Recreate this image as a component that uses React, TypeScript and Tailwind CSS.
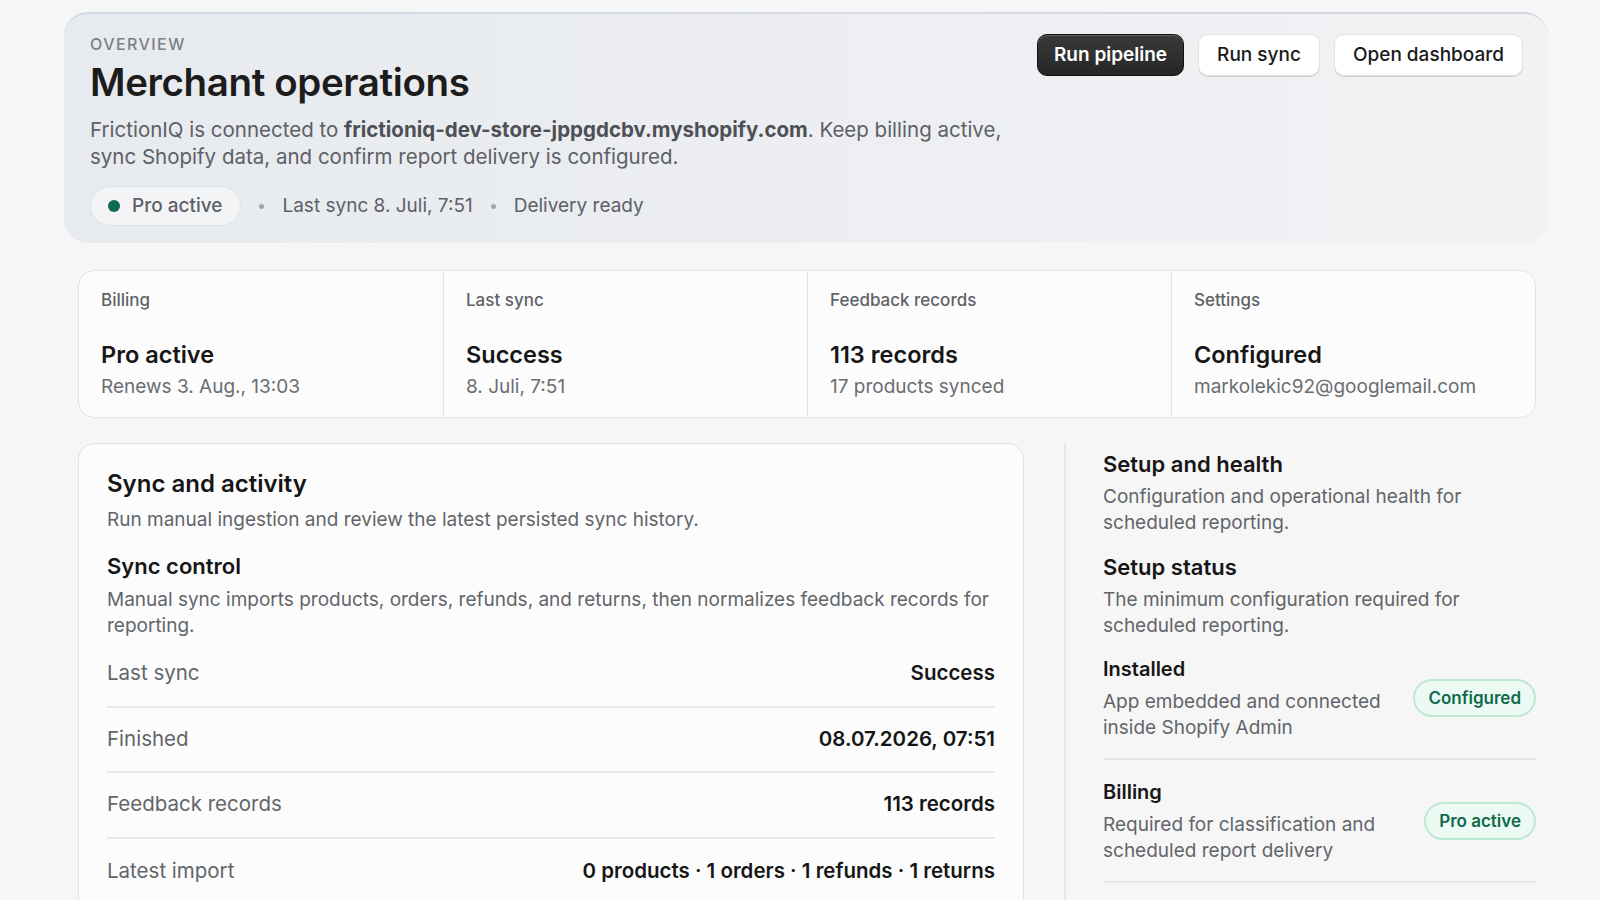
import React from 'react'

const font = "font-['Inter','Noto_Sans',sans-serif]"

const stats = [
  { label: 'Billing', value: 'Pro active', sub: 'Renews 3. Aug., 13:03' },
  { label: 'Last sync', value: 'Success', sub: '8. Juli, 7:51' },
  { label: 'Feedback records', value: '113 records', sub: '17 products synced' },
  { label: 'Settings', value: 'Configured', sub: 'markolekic92@googlemail.com' },
]

const rows = [
  { label: 'Last sync', value: 'Success' },
  { label: 'Finished', value: '08.07.2026, 07:51' },
  { label: 'Feedback records', value: '113 records' },
  { label: 'Latest import', value: '0 products · 1 orders · 1 refunds · 1 returns' },
]

const checks = [
  { title: 'Installed', desc: 'App embedded and connected inside Shopify Admin', badge: 'Configured' },
  { title: 'Billing', desc: 'Required for classification and scheduled report delivery', badge: 'Pro active' },
]

export default function App() {
  return (
    <div className={`${font} min-h-screen bg-[#f6f6f6] pl-[78px] pr-[64px] pt-3 text-[#1a1a1a] antialiased`}>
      {/* Hero */}
      <section className="-ml-[14px] -mr-3 rounded-3xl border-t-2 border-[#d3d9e1] bg-gradient-to-r from-[#e7eaee] to-[#f1f2f4] pl-[26px] pr-[25px] pt-[19px] pb-[17px]">
        <div className="flex justify-between">
          <div>
            <div className="text-[16px] font-medium leading-[22px] tracking-[0.09em] text-[#7b7f86]">OVERVIEW</div>
            <h1 className="mt-[4px] text-[38.5px] font-semibold leading-[46px] tracking-[-0.01em] text-[#1c1c1c]">Merchant operations</h1>
            <p className="mt-[11px] max-w-[930px] text-[20.5px] leading-[27px] text-[#5d6066]">
              FrictionIQ is connected to <span className="font-bold text-[#4d5056]">frictioniq-dev-store-jppgdcbv.myshopify.com</span>. Keep billing active, sync Shopify data, and confirm report delivery is configured.
            </p>
            <div className="mt-[16px] flex items-center text-[19px] text-[#5d6066]">
              <div className="flex h-[40px] items-center gap-[12px] rounded-full border border-[#dfe2e6] bg-[#f3f4f6] pl-[17px] pr-[18px] font-medium">
                <span className="h-[12px] w-[12px] rounded-full bg-[#0e6b52]" />
                Pro active
              </div>
              <span className="mx-[18px] h-[5px] w-[5px] rounded-full bg-[#a3a6ab]" />
              <span>Last sync 8. Juli, 7:51</span>
              <span className="mx-[18px] h-[5px] w-[5px] rounded-full bg-[#a3a6ab]" />
              <span>Delivery ready</span>
            </div>
          </div>
          <div className="flex items-start gap-[14px] pt-[1px]">
            <button className="h-[42px] rounded-[10px] border border-[#111] bg-gradient-to-b from-[#3a3a3a] to-[#262626] px-[16px] text-[19px] font-semibold text-white shadow-[inset_0_1px_0_rgba(255,255,255,0.2)]">
              Run pipeline
            </button>
            <button className="h-[42px] rounded-[10px] border border-[#e3e3e3] bg-white px-[18px] text-[19px] font-medium text-[#1a1a1a] shadow-[0_1px_0_#cfcfcf]">
              Run sync
            </button>
            <button className="h-[42px] rounded-[10px] border border-[#e3e3e3] bg-white px-[18px] text-[19px] font-medium text-[#1a1a1a] shadow-[0_1px_0_#cfcfcf]">
              Open dashboard
            </button>
          </div>
        </div>
      </section>

      {/* Stats */}
      <section className="mt-[27px] grid grid-cols-4 rounded-2xl border border-[#e2e2e2] bg-[#fcfcfc]">
        {stats.map((s, i) => (
          <div key={s.label} className={`px-[22px] pt-[18px] pb-[17px] ${i > 0 ? 'border-l border-[#e2e2e2]' : ''}`}>
            <div className="text-[17px] font-medium leading-[22px] text-[#5f6267]">{s.label}</div>
            <div className="mt-[29px] text-[23.5px] font-semibold leading-[30px] text-[#161616]">{s.value}</div>
            <div className="mt-[4px] text-[19px] leading-[26px] text-[#6a6d72]">{s.sub}</div>
          </div>
        ))}
      </section>

      {/* Lower */}
      <section className="mt-[25px] grid grid-cols-[946px_1fr] gap-[40px]">
        <div className="rounded-2xl border border-[#e2e2e2] bg-[#fcfcfc] px-[28px] pt-[24px] pb-[20px]">
          <h2 className="text-[24px] font-semibold leading-[32px] text-[#161616]">Sync and activity</h2>
          <p className="mt-[7px] text-[19px] leading-[26px] text-[#62656a]">Run manual ingestion and review the latest persisted sync history.</p>
          <h3 className="mt-[18px] text-[22px] font-semibold leading-[30px] text-[#161616]">Sync control</h3>
          <p className="mt-[6px] text-[19px] leading-[25.5px] text-[#62656a]">
            Manual sync imports products, orders, refunds, and returns, then normalizes feedback records for reporting.
          </p>
          <div className="mt-[4px]">
            {rows.map((r, i) => (
              <div
                key={r.label}
                className={`flex h-[65.5px] items-center justify-between text-[20.5px] ${i < rows.length - 1 ? 'border-b-2 border-[#e8e9eb]' : ''}`}
              >
                <span className="text-[#62656a]">{r.label}</span>
                <span className="font-semibold text-[#161616]">{r.value}</span>
              </div>
            ))}
          </div>
        </div>

        <div className="border-l-2 border-[#e6e6e6] pl-[37px]">
          <h2 className="mt-[6px] text-[22px] font-semibold leading-[30px] text-[#161616]">Setup and health</h2>
          <p className="mt-[5px] text-[19px] leading-[25.5px] text-[#62656a]">Configuration and operational health for scheduled reporting.</p>
          <h3 className="mt-[17px] text-[22px] font-semibold leading-[30px] text-[#161616]">Setup status</h3>
          <p className="mt-[5px] text-[19px] leading-[25.5px] text-[#62656a]">The minimum configuration required for scheduled reporting.</p>
          <div className="mt-[18px]">
            {checks.map((c) => (
              <div key={c.title} className="mb-[19px] flex items-center justify-between gap-4 border-b-2 border-[#e6e7e9] pb-[18px]">
                <div className="min-w-0 flex-1">
                  <div className="text-[20px] font-semibold leading-[26px] text-[#161616]">{c.title}</div>
                  <p className="mt-[7px] max-w-[290px] text-[19px] leading-[25.5px] text-[#62656a]">{c.desc}</p>
                </div>
                <span className="shrink-0 rounded-full border-2 border-[#bfe8d3] bg-[#edf9f3] px-[13px] py-[6.5px] text-[17px] font-semibold leading-[21px] text-[#0f6b4c]">
                  {c.badge}
                </span>
              </div>
            ))}
          </div>
        </div>
      </section>
    </div>
  )
}
